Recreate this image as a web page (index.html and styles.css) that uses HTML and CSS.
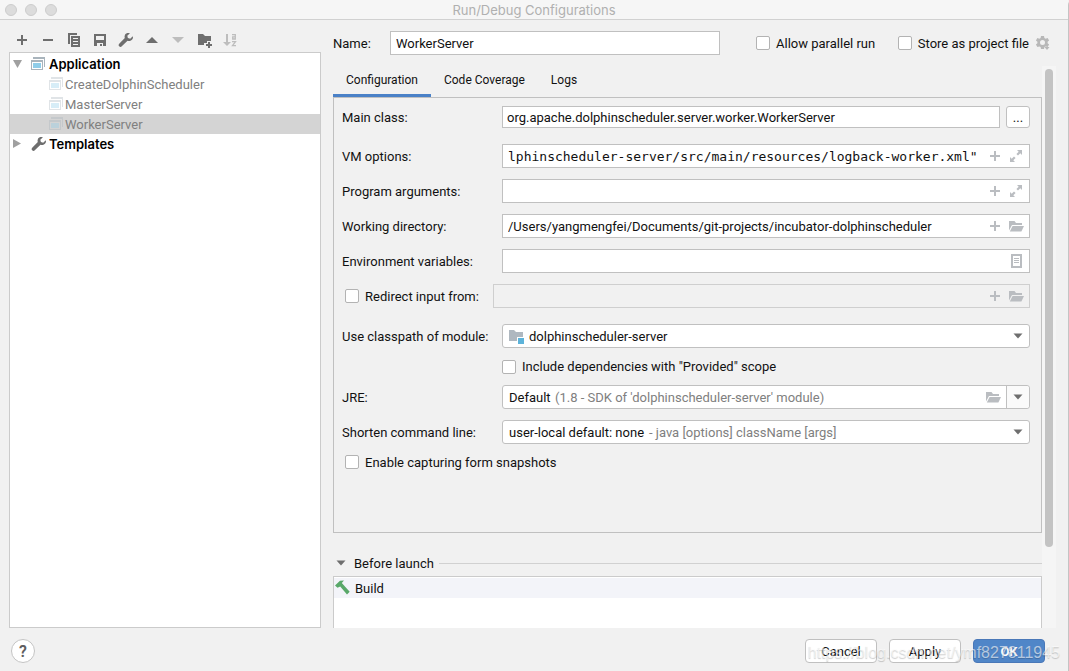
FILE: index.html
```html
<!DOCTYPE html>
<html lang="en">
<head>
<meta charset="utf-8">
<title>Run/Debug Configurations</title>
<link rel="stylesheet" href="styles.css">
</head>
<body>
<svg class="sprite" aria-hidden="true">
  <symbol id="plus" viewBox="0 0 16 16"><path d="M7 3h2v4h4v2H9v4H7V9H3V7h4z"/></symbol>
  <symbol id="expand" viewBox="0 0 16 16"><path d="M9 2h5v5l-1.700-1.700-2.300 2.300-1.600-1.600 2.300-2.300zM2 14V9l1.700 1.700L6 8.400 7.600 10l-2.300 2.300L7 14z"/></symbol>
  <symbol id="folder-open" viewBox="0 0 16 16"><path d="M1 3h5.500l1.500 2h6v2H4L1 12.500z"/><path d="M4.600 8H16l-2.600 5.500H1.800z"/></symbol>
  <symbol id="wrench" viewBox="0 0 16 16"><path d="M14.800 4.200l-2.600 2.500-2.300-.6-.6-2.300 2.600-2.600C9.900.6 7.800 1.100 6.900 2.900c-.5 1.100-.5 2.200-.1 3.200L1.200 11.700c-.8.800-.8 1.900 0 2.600.7.800 1.900.8 2.600 0l5.700-5.500c1.100.4 2.300.3 3.400-.3 1.700-.9 2.500-2.700 1.900-4.300z"/></symbol>
  <symbol id="app" viewBox="0 0 16 16"><path fill="#a9b4bc" d="M2 1h12v10h-1V3H2z"/><path fill="#a9b4bc" fill-rule="evenodd" d="M0 4h12v10H0zM1 6h10v7H1z"/><path fill="#8fcde9" d="M2 7h8v5H2z"/></symbol>
  <symbol id="down" viewBox="0 0 16 16"><path d="M3.500 5.500h9L8 10.500z"/></symbol>
</svg>
<main class="window">
  <header class="titlebar">
    <div class="lights"><span class="light"></span><span class="light"></span><span class="light"></span></div>
    <h1 class="title">Run/Debug Configurations</h1>
  </header>

  <div class="body">
    <aside class="sidebar">
      <div class="toolbar">
        <button class="tool" aria-label="Add"><svg class="icon"><use href="#plus"/></svg></button>
        <button class="tool" aria-label="Remove"><svg class="icon" viewBox="0 0 16 16"><path d="M3 7h10v2H3z"/></svg></button>
        <button class="tool" aria-label="Copy"><svg class="icon" viewBox="0 0 16 16"><path d="M2 1h9v2H4v9H2z"/><path fill-rule="evenodd" d="M5 4h9v11H5zM7 6v1h5V6zM7 9v1h5V9zM7 12v1h5v-1z"/></svg></button>
        <button class="tool" aria-label="Save"><svg class="icon" viewBox="0 0 16 16"><path fill-rule="evenodd" d="M2 2h12v12H2zM4 4v4h8V4zM5 11v3h6v-3z"/><path d="M8 12h2v2H8z"/></svg></button>
        <button class="tool" aria-label="Edit templates"><svg class="icon"><use href="#wrench"/></svg></button>
        <button class="tool" aria-label="Move up"><svg class="icon" viewBox="0 0 16 16"><path d="M2 11h12L8 5z"/></svg></button>
        <button class="tool off" aria-label="Move down" disabled><svg class="icon" viewBox="0 0 16 16"><path d="M2 5h12l-6 6z"/></svg></button>
        <button class="tool" aria-label="New folder"><svg class="icon" viewBox="0 0 16 16"><path d="M2 2h5l2 2h6v5h-4v2H8v2H2z"/><path d="M12 10h2v2h2v2h-2v2h-2v-2h-2v-2h2z"/></svg></button>
        <button class="tool off" aria-label="Sort alphabetically" disabled><svg class="icon" viewBox="0 0 16 16"><path d="M4 2h2v8h3l-4 4-4-4h3z"/><path fill="none" stroke="currentColor" stroke-width="1.300" d="M10 2.600h3.300V7H10.700V4.900h2.600M10 9.700h3.500l-3 4h3.500"/></svg></button>
      </div>
      <ul class="tree">
        <li class="node"><svg class="twisty" viewBox="0 0 10 10"><path d="M0 1h9L4.500 9z"/></svg><svg class="icon"><use href="#app"/></svg><b>Application</b></li>
        <li class="node leaf"><svg class="icon faint"><use href="#app"/></svg>CreateDolphinScheduler</li>
        <li class="node leaf"><svg class="icon faint"><use href="#app"/></svg>MasterServer</li>
        <li class="node leaf selected"><svg class="icon faint"><use href="#app"/></svg>WorkerServer</li>
        <li class="node"><svg class="twisty" viewBox="0 0 10 10"><path d="M0 0v9l8-4.500z"/></svg><svg class="icon"><use href="#wrench"/></svg><b>Templates</b></li>
      </ul>
    </aside>

    <section class="editor">
      <div class="name-row">
        <label class="name-label" for="name">Name:</label>
        <input class="text name-input" id="name" value="WorkerServer">
        <label class="check parallel"><input type="checkbox" class="box">Allow parallel run</label>
        <label class="check store"><input type="checkbox" class="box">Store as project file</label>
        <button class="tool gear" aria-label="Storage options"><svg class="icon" viewBox="0 0 16 16"><path fill-rule="evenodd" d="M6 1h3l.4 2 1.300.7 1.900-.7 1.500 2.500-1.500 1.300v1.500l1.500 1.300-1.500 2.500-1.900-.7-1.300.7L9 14H6l-.4-1.900-1.300-.7-1.900.7L.9 9.600l1.500-1.300V6.800L.9 5.500 2.400 3l1.900.7L5.600 3zM7.500 5a2.500 2.500 0 100 5 2.500 2.500 0 000-5z"/><path d="M9.500 12h5L12 15z"/></svg></button>
      </div>

      <div class="scroller">
        <div class="content">
          <nav class="tabs">
            <button class="tab active">Configuration</button>
            <button class="tab">Code Coverage</button>
            <button class="tab">Logs</button>
          </nav>
          <form class="panel">
            <div class="row">
              <label class="label" for="main">Main class:</label>
              <input class="text short" id="main" value="org.apache.dolphinscheduler.server.worker.WorkerServer">
              <button type="button" class="more" aria-label="Browse">...</button>
            </div>
            <div class="row spaced">
              <label class="label" for="vm">VM options:</label>
              <div class="field"><input class="inner mono" id="vm" value="lphinscheduler-server/src/main/resources/logback-worker.xml&quot;"><svg class="icon"><use href="#plus"/></svg><svg class="icon"><use href="#expand"/></svg></div>
            </div>
            <div class="row">
              <label class="label" for="args">Program arguments:</label>
              <div class="field"><input class="inner" id="args"><svg class="icon"><use href="#plus"/></svg><svg class="icon"><use href="#expand"/></svg></div>
            </div>
            <div class="row">
              <label class="label" for="dir">Working directory:</label>
              <div class="field"><input class="inner" id="dir" value="/Users/yangmengfei/Documents/git-projects/incubator-dolphinscheduler"><svg class="icon"><use href="#plus"/></svg><svg class="icon"><use href="#folder-open"/></svg></div>
            </div>
            <div class="row">
              <label class="label" for="env">Environment variables:</label>
              <div class="field"><input class="inner" id="env"><svg class="icon" viewBox="0 0 16 16"><path fill-rule="evenodd" d="M3 1h11v14H3zM5 3v10h7V3z"/><path d="M6 5h5v1H6zM6 7h5v1H6zM6 9h5v1H6z"/></svg></div>
            </div>
            <div class="row">
              <label class="check redirect"><input type="checkbox" class="box">Redirect input from:</label>
              <div class="field disabled"><input class="inner" aria-label="Redirect input from" disabled><svg class="icon"><use href="#plus"/></svg><svg class="icon"><use href="#folder-open"/></svg></div>
            </div>
            <div class="row spaced">
              <label class="label" for="module">Use classpath of module:</label>
              <div class="combo">
                <svg class="icon" viewBox="0 0 16 16"><path fill="#afb8c0" d="M0 2h5l2 2h7v5H8v4H0z"/><path fill="#5db3da" d="M9 10h6v6H9z"/></svg>
                <select class="select wide" id="module"><option>dolphinscheduler-server</option></select>
                <svg class="icon arrow"><use href="#down"/></svg>
              </div>
            </div>
            <label class="check provided"><input type="checkbox" class="box">Include dependencies with "Provided" scope</label>
            <div class="row">
              <label class="label" for="jre">JRE:</label>
              <div class="combo">
                <select class="select" id="jre"><option>Default</option></select>
                <span class="hint">(1.8 - SDK of 'dolphinscheduler-server' module)</span>
                <svg class="icon muted"><use href="#folder-open"/></svg>
                <span class="split"><svg class="icon arrow"><use href="#down"/></svg></span>
              </div>
            </div>
            <div class="row">
              <label class="label" for="shorten">Shorten command line:</label>
              <div class="combo">
                <select class="select" id="shorten"><option>user-local default: none</option></select>
                <span class="hint">- java [options] className [args]</span>
                <svg class="icon arrow"><use href="#down"/></svg>
              </div>
            </div>
            <label class="check snapshots"><input type="checkbox" class="box">Enable capturing form snapshots</label>
          </form>
          <div class="launch-head"><svg class="icon"><use href="#down"/></svg><span>Before launch</span><span class="rule"></span></div>
          <ul class="tasks">
            <li class="task"><svg class="icon" viewBox="0 0 16 16"><path fill="#59a869" d="M1 5.500L6 .8 10 .5 7.800 3l7.900 8.700-2.700 2.800-6.800-8L3.500 7.800z"/></svg>Build</li>
          </ul>
        </div>
        <div class="track"><div class="thumb"></div></div>
      </div>
    </section>
  </div>

  <footer class="footer">
    <button class="help" aria-label="Help">?</button>
    <button class="btn">Cancel</button>
    <button class="btn">Apply</button>
    <button class="btn primary">OK</button>
    <span class="watermark">https://blog.csdn.net/ymf827811945</span>
  </footer>
</main>
</body>
</html>
```
FILE: styles.css
```css
* { box-sizing: border-box; }

body {
  margin: 0;
  background: #f1f1f1;
  color: #111;
  font: 13px/17px Roboto, "Liberation Sans", sans-serif;
}

input, select, button { font: inherit; color: inherit; margin: 0; }
button { padding: 0; border: 0; background: none; }
ul { margin: 0; padding: 0; list-style: none; }

.sprite { position: absolute; width: 0; height: 0; }
.icon { width: 16px; height: 16px; flex: none; fill: currentColor; }

.window {
  display: flex;
  flex-direction: column;
  height: 100vh;
  min-height: 560px;
  border-right: 1px solid #c4c4c4;
  border-radius: 0 5px 0 0;
}

/* Title bar */
.titlebar {
  display: grid;
  grid-template-columns: 1fr auto 1fr;
  align-items: center;
  height: 20px;
  padding: 0 5px;
  background: #f6f6f6;
  border-bottom: 1px solid #d1d1d1;
}
.lights { display: flex; gap: 8px; }
.light { width: 12px; height: 12px; border-radius: 50%; background: #dcdcdc; border: 1px solid #cdcdcd; }
.title { margin: 0; font: 13px/16px Inter, sans-serif; color: #b0b0b0; }

.body { display: flex; flex: 1; min-height: 0; }

/* Configuration list */
.sidebar { display: flex; flex-direction: column; width: 321px; padding-left: 9px; }
.toolbar { display: flex; gap: 10px; height: 32px; padding: 8px 5px 0; align-items: center; }
.tool { display: flex; color: #6e6e6e; }
.off { color: #bdbdbd; }
.tree { flex: 1; padding-top: 1px; background: #fff; border: 1px solid #cbcbcb; }
.node { display: flex; align-items: center; height: 20px; padding-left: 3px; color: #6e6e6e; }
.node b { margin-left: 2px; color: #000; font: 600 13px/16px Inter, sans-serif; }
.node .twisty { width: 10px; height: 10px; margin-right: 8px; fill: #a0a0a0; }
.leaf { padding-left: 39px; color: #808080; }
.selected { background: #d4d4d4; }
.faint { opacity: .35; }

/* Editor */
.editor { display: flex; flex-direction: column; flex: 1; min-width: 0; padding-left: 12px; }
.name-row { display: flex; align-items: center; height: 46px; padding-right: 17px; flex: none; }
.name-label { width: 57px; }
.text {
  min-width: 0;
  height: 24px;
  padding: 0 5px;
  background: #fff;
  border: 1px solid #c0c0c0;
  outline: 0;
}
.name-input { width: 330px; }
.check { display: flex; align-items: center; gap: 6px; white-space: nowrap; }
.box {
  appearance: none;
  width: 14px;
  height: 14px;
  flex: none;
  background: #fff;
  border: 1px solid #b3b3b3;
  border-radius: 2px;
}
.parallel { margin-left: 36px; }
.store { margin-left: auto; }
.gear { margin-left: 6px; color: #b8b8b8; }

.scroller { display: flex; flex: 1; min-height: 0; margin-right: 12px; overflow: hidden; }
.content { display: flex; flex-direction: column; flex: 1; min-width: 0; }
.track { width: 14px; padding: 3px; background: #f5f5f5; }
.thumb { width: 8px; height: 86%; border-radius: 4px; background: #c3c3c3; }

.tabs { display: flex; height: 31px; flex: none; }
.tab { padding: 0 13px; border-bottom: 3px solid transparent; font-size: 12px; }
.active { z-index: 1; border-bottom-color: #4a81c7; }

.panel {
  display: flex;
  flex-direction: column;
  gap: 11px;
  min-height: 436px;
  padding: 8px 11px 8px 8px;
  border: 1px solid #c0c0c0;
}
.row { display: flex; align-items: center; }
.spaced { margin-top: 5px; }
.label { width: 160px; flex: none; }
.short { flex: 1; height: 22px; padding: 0 4px; }
.more { width: 24px; height: 22px; margin-left: 6px; background: #fff; border: 1px solid #c0c0c0; border-radius: 3px; }
.field, .combo {
  display: flex;
  align-items: center;
  flex: 1;
  min-width: 0;
  height: 24px;
  background: #fff;
  border: 1px solid #c0c0c0;
}
.field { gap: 5px; padding: 0 5px; color: #babdc1; }
.inner { flex: 1; min-width: 0; padding: 0; border: 0; outline: 0; background: none; color: #111; }
.mono { font-family: "DejaVu Sans Mono", monospace; }
.disabled { background: none; border-color: #cfcfcf; }
.redirect { width: 151px; padding-left: 3px; }
.combo { gap: 4px; padding-left: 6px; border-radius: 3px; }
.select { appearance: none; padding: 0; border: 0; outline: 0; background: none; }
.wide { flex: 1; }
.hint { flex: 1; color: #808080; white-space: nowrap; }
.arrow { margin-right: 3px; color: #6e6e6e; }
.muted { color: #babdc1; }
.split { display: flex; align-items: center; height: 22px; margin-left: 1px; padding-left: 3px; background: #fafafa; border-left: 1px solid #c0c0c0; border-radius: 0 3px 3px 0; }
.provided { height: 15px; margin-left: 160px; }
.snapshots { height: 14px; padding-left: 3px; }

/* Tasks that run before launch */
.launch-head { display: flex; align-items: center; gap: 5px; height: 16px; margin: 22px 0 5px; flex: none; }
.launch-head .icon { color: #6e6e6e; }
.rule { flex: 1; height: 1px; background: #d1d1d1; }
.tasks { flex: 1; padding-top: 1px; background: #fff; border: 1px solid #cbcbcb; border-bottom: 0; }
.task { display: flex; align-items: center; gap: 5px; height: 20px; background: #f3f4f9; }

/* Footer */
.footer { position: relative; display: flex; align-items: center; gap: 12px; height: 43px; padding: 3px 23px 0 11px; flex: none; }
.help { width: 24px; height: 24px; margin-right: auto; border: 1px solid #c4c4c4; border-radius: 50%; background: #fff; color: #5e5e5e; font-size: 16px; font-weight: 600; }
.btn { width: 72px; height: 24px; background: #fff; border: 1px solid #c0c0c0; border-radius: 4px; }
.primary { background: #5086c8; border-color: #4a78b8; color: #fff; font-weight: 600; }
.watermark {
  position: absolute;
  right: 8px;
  bottom: 8px;
  color: rgba(255, 255, 255, .6);
  text-shadow: 0 1px 1px rgba(0, 0, 0, .2);
  font: 16px/20px "Liberation Sans", sans-serif;
  pointer-events: none;
}
```
